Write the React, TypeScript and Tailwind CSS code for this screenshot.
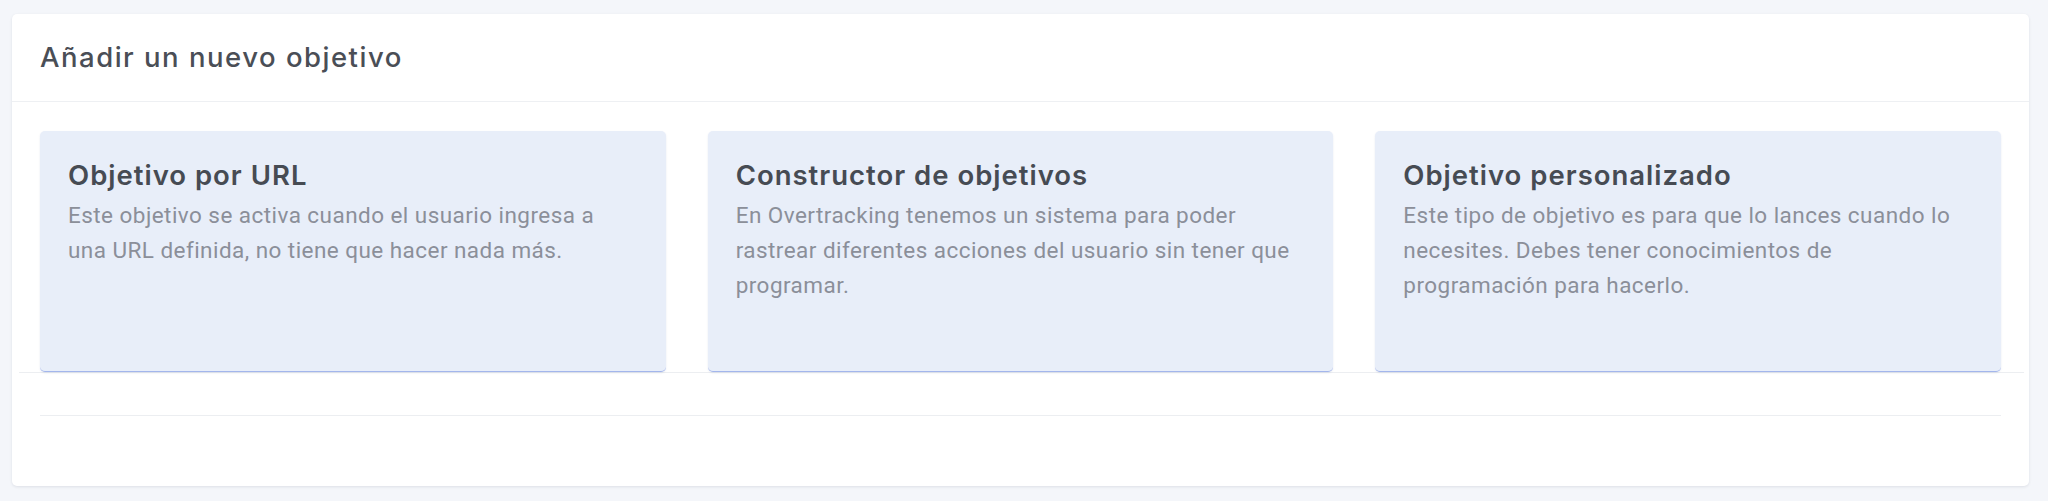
import React from "react";

const cards = [
  {
    title: "Objetivo por URL",
    text: "Este objetivo se activa cuando el usuario ingresa a una URL definida, no tiene que hacer nada más.",
  },
  {
    title: "Constructor de objetivos",
    text: "En Overtracking tenemos un sistema para poder rastrear diferentes acciones del usuario sin tener que programar.",
  },
  {
    title: "Objetivo personalizado",
    text: "Este tipo de objetivo es para que lo lances cuando lo necesites. Debes tener conocimientos de programación para hacerlo.",
  },
];

export default function App() {
  return (
    <div className="min-h-[501px] w-full bg-[#f4f6fa] pt-[14px] pl-[12px] pr-[19px] pb-[15px]">
      <div className="h-[472px] rounded-[5px] bg-white shadow-[0_1px_3px_rgba(20,30,60,0.10)]">
        <div className="flex h-[88px] items-center border-b border-[#eef0f3] px-[28px]">
          <h1 className="text-[27.5px] font-medium leading-none tracking-[1.5px] text-[#4a4e56] [font-family:Inter,'Noto_Sans',sans-serif]">
            Añadir un nuevo objetivo
          </h1>
        </div>
        <div className="pt-[29px]">
          <div className="grid grid-cols-3 gap-[42px] px-[28px]">
            {cards.map((c) => (
              <div
                key={c.title}
                className="h-[241px] rounded-[5px] border-b border-[#a3b6ec] bg-[#e8eef9] px-[28px] pt-[29px] shadow-[0_1px_2px_rgba(60,80,140,0.12)]"
              >
                <h2 className="text-[27.5px] font-semibold leading-[30px] tracking-[1px] text-[#464b53] [font-family:Inter,'Noto_Sans',sans-serif]">
                  {c.title}
                </h2>
                <p className="mt-[8px] text-[22.5px] leading-[35px] tracking-[0.45px] text-[#8b8f99] [font-family:Roboto,'Liberation_Sans',sans-serif]">
                  {c.text}
                </p>
              </div>
            ))}
          </div>
          <div className="ml-[7px] mr-[5px] h-px bg-[#eceef1]" />
          <div className="mx-[28px] mt-[42px] h-px bg-[#eceef1]" />
        </div>
      </div>
    </div>
  );
}
